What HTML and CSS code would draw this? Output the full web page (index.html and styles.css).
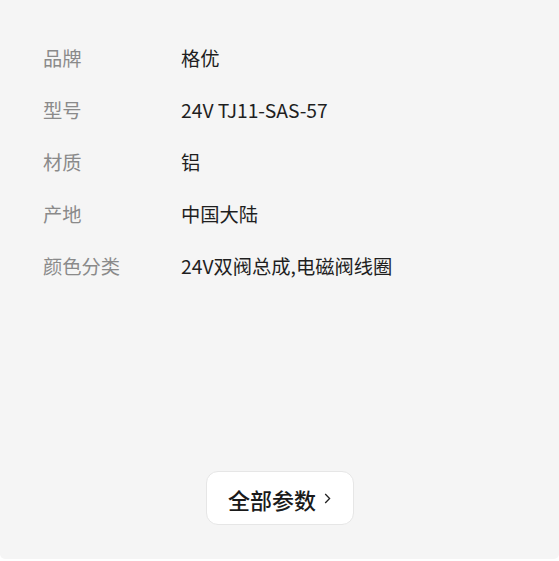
FILE: index.html
```html
<!DOCTYPE html>
<html lang="zh">
<head>
<meta charset="utf-8">
<link rel="stylesheet" href="styles.css">
</head>
<body>
<div class="card">
  <div class="params">
    <div class="row"><span class="label">品牌</span><span class="value">格优</span></div>
    <div class="row"><span class="label">型号</span><span class="value">24V TJ11-SAS-57</span></div>
    <div class="row"><span class="label">材质</span><span class="value">铝</span></div>
    <div class="row"><span class="label">产地</span><span class="value">中国大陆</span></div>
    <div class="row"><span class="label">颜色分类</span><span class="value">24V双阀总成,电磁阀线圈</span></div>
  </div>
  <div class="footer">
    <button class="all-btn"><span class="btn-text">全部参数</span><svg class="chev" width="7" height="11" viewBox="0 0 7 11"><path d="M1.2 1 L5.6 5.5 L1.2 10" fill="none" stroke="#222" stroke-width="1.3"/></svg></button>
  </div>
</div>
</body>
</html>
```
FILE: styles.css
```css
html, body {
  margin: 0;
  padding: 0;
  background: #ffffff;
}
body {
  font-family: "Noto Sans CJK SC", "Noto Sans", sans-serif;
}
.card {
  box-sizing: border-box;
  width: 559px;
  height: 559px;
  background: #f5f5f5;
  border-radius: 0 0 5px 5px;
  display: flex;
  flex-direction: column;
  padding: 32px 0 34px 43px;
}
.params {
  display: flex;
  flex-direction: column;
}
.row {
  display: flex;
  height: 52px;
  align-items: center;
  font-size: 19.3px;
}
.label {
  width: 138px;
  color: #8a8a8a;
}
.value {
  color: #1f1f1f;
}
.footer {
  margin-top: auto;
  display: flex;
  justify-content: center;
  padding-right: 43px;
}
.all-btn {
  box-sizing: border-box;
  width: 148px;
  height: 54px;
  background: #ffffff;
  border: 1px solid #e6e6e6;
  border-radius: 12px;
  font-family: "Noto Sans CJK SC", "Noto Sans", sans-serif;
  font-size: 22px;
  font-weight: 500;
  color: #1a1a1a;
  display: flex;
  align-items: center;
  justify-content: center;
  gap: 8px;
  padding: 2px 0 0 0;
}
.chev {
  display: block;
  margin-top: -2px;
}
```
